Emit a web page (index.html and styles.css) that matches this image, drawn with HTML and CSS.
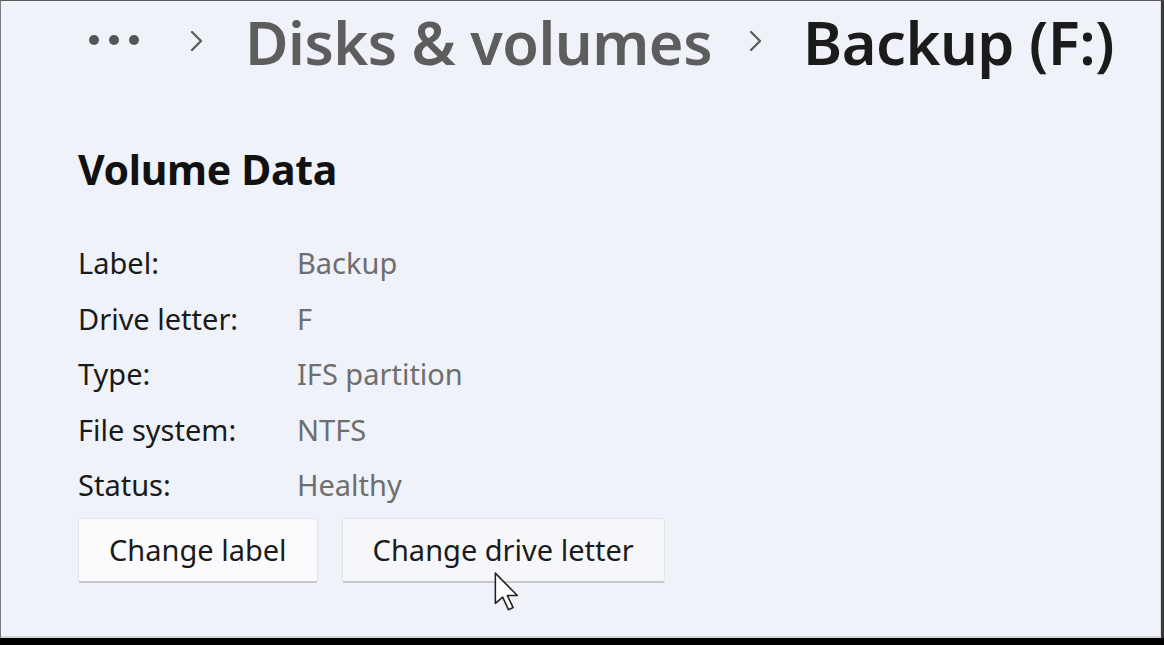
FILE: index.html
```html
<!DOCTYPE html>
<html>
<head>
<meta charset="utf-8">
<link rel="stylesheet" href="styles.css">
</head>
<body>
<div class="frame">
  <div class="page">
    <nav class="crumbs">
      <span class="more"><i></i><i></i><i></i></span>
      <svg class="chev" width="16" height="24" viewBox="0 0 16 24"><path d="M3 3 L12 12 L3 21" fill="none" stroke="#5e5e5e" stroke-width="2.4" stroke-linecap="round" stroke-linejoin="round"/></svg>
      <span class="crumb">Disks &amp; volumes</span>
      <svg class="chev" width="16" height="24" viewBox="0 0 16 24"><path d="M3 3 L12 12 L3 21" fill="none" stroke="#5e5e5e" stroke-width="2.4" stroke-linecap="round" stroke-linejoin="round"/></svg>
      <span class="crumb current">Backup (F:)</span>
    </nav>
    <section class="volume">
      <h2 class="title">Volume Data</h2>
      <dl class="props">
        <dt>Label:</dt><dd>Backup</dd>
        <dt>Drive letter:</dt><dd>F</dd>
        <dt>Type:</dt><dd>IFS partition</dd>
        <dt>File system:</dt><dd>NTFS</dd>
        <dt>Status:</dt><dd>Healthy</dd>
      </dl>
      <div class="actions">
        <button class="btn">Change label</button>
        <button class="btn hover">Change drive letter
          <svg class="cursor" width="34" height="46" viewBox="0 0 32 44"><path d="M2 2 L2 31 L9 25 L14.5 37 L19 35 L13.5 23.5 L23 23.5 Z" fill="#fff" stroke="#222" stroke-width="1.5" stroke-linejoin="round"/></svg>
        </button>
      </div>
    </section>
  </div>
</div>
</body>
</html>
```
FILE: styles.css
```css
html, body {
  margin: 0;
  padding: 0;
  background: #000;
}
body {
  width: 1164px;
  height: 645px;
  overflow: hidden;
  font-family: "Noto Sans", "Open Sans", sans-serif;
}
.frame {
  width: 1164px;
  height: 638px;
  box-sizing: border-box;
  border-top: 1px solid #5a5a5a;
  border-left: 1px solid #7a7a7a;
  border-right: 3px solid #3a3a3a;
  background: #eff2f9;
}
.page {
  height: 100%;
  box-sizing: border-box;
  border-right: 1px solid #d8dbe0;
  border-bottom: 2px solid #d0d3d8;
  padding: 0 0 0 77px;
}
.crumbs {
  display: flex;
  align-items: center;
  height: 88px;
  color: #5d5d5d;
}
.more {
  display: flex;
  gap: 10px;
  margin-left: 11px;
  margin-top: -10px;
}
.more i {
  width: 10px;
  height: 10px;
  border-radius: 50%;
  background: #555;
}
.chev {
  margin: -8px 40px 0 50px;
}
.crumb {
  font-size: 59.5px;
  font-weight: 600;
  letter-spacing: -0.5px;
  line-height: 1;
  margin-top: -6px;
  color: #5d5d5d;
}
.crumb.current {
  color: #1b1b1b;
}
.crumb + .chev {
  margin-left: 36px;
  margin-right: 39px;
}
.volume {
  padding-top: 56px;
}
.title {
  margin: 0;
  font-size: 41px;
  font-weight: 700;
  line-height: 48px;
  color: #111;
  letter-spacing: -0.3px;
}
.props {
  display: grid;
  grid-template-columns: 219px auto;
  grid-auto-rows: 55.5px;
  align-items: center;
  margin: 42px 0 0 0;
  font-size: 29px;
}
.props dt {
  color: #1a1a1a;
}
.props dd {
  margin: 0;
  color: #6e6e6e;
}
.actions {
  display: flex;
  gap: 24px;
  margin-top: 5px;
}
.btn {
  position: relative;
  height: 65px;
  padding: 0 30px;
  font-family: inherit;
  font-size: 29px;
  color: #1b1b1b;
  background: #fbfbfd;
  border: 1.5px solid #e3e4e7;
  border-bottom: 2.5px solid #c8c9cc;
  border-radius: 3px;
}
.btn.hover {
  background: #f6f7fa;
}
.cursor {
  position: absolute;
  left: 150px;
  top: 52px;
}
```
